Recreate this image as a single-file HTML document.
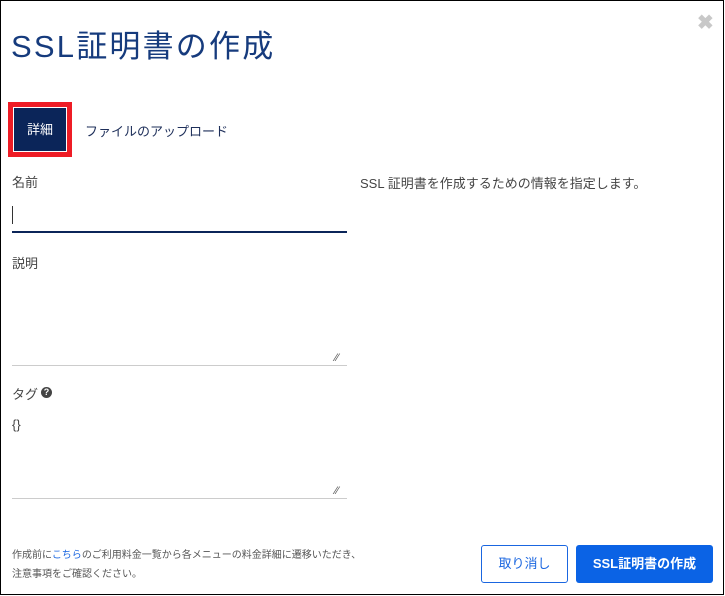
<!DOCTYPE html>
<html><head><meta charset="utf-8"><style>
*{margin:0;padding:0;box-sizing:border-box}
body{width:725px;height:596px;background:#fff;font-family:"Liberation Sans","Noto Sans CJK JP",sans-serif;position:relative;overflow:hidden}
.frame{position:absolute;left:0;top:0;width:724px;height:595px;border:1px solid #000}
.a{position:absolute;white-space:nowrap}
.lbl{font-size:13px;color:#444}
</style></head><body>
<div class="frame"></div>
<div class="a" style="left:11px;top:21px;font-size:31px;color:#163b7d;letter-spacing:2.2px">SSL証明書の作成</div>
<div class="a" style="left:697px;top:10px;font-size:20px;color:#c8c8c8;font-weight:bold">✖</div>
<div class="a" style="left:8px;top:102px;width:64px;height:55px;background:#ee1c25"></div>
<div class="a" style="left:13px;top:107px;width:54px;height:45px;background:#0b2559;border:1px solid #fff;color:#fff;font-size:13px;text-align:center;line-height:43px">詳細</div>
<div class="a" style="left:85px;top:121px;font-size:13px;color:#1e2f5a">ファイルのアップロード</div>
<div class="a lbl" style="left:12px;top:172px">名前</div>
<div class="a" style="left:12px;top:206px;width:1px;height:18px;background:#333"></div>
<div class="a" style="left:12px;top:231px;width:335px;height:2px;background:#0b2559"></div>
<div class="a lbl" style="left:12px;top:253px">説明</div>
<div class="a" style="left:12px;top:365px;width:335px;height:1px;background:#ccc"></div>
<div class="a" style="left:335px;top:352px;font-size:11px;color:#555">⁄⁄</div>
<div class="a lbl" style="left:12px;top:384px">タグ</div>
<div class="a" style="left:41px;top:387px;width:11px;height:11px;border-radius:50%;background:#444;color:#fff;font-size:9px;font-weight:bold;text-align:center;line-height:11px">?</div>
<div class="a lbl" style="left:12px;top:417px">{}</div>
<div class="a" style="left:12px;top:498px;width:335px;height:1px;background:#ccc"></div>
<div class="a" style="left:335px;top:485px;font-size:11px;color:#555">⁄⁄</div>
<div class="a" style="left:360px;top:173px;font-size:13px;color:#444">SSL 証明書を作成するための情報を指定します。</div>
<div class="a" style="left:12px;top:546px;font-size:10px;color:#555;line-height:19px">作成前に<span style="color:#1a66e0">こちら</span>のご利用料金一覧から各メニューの料金詳細に遷移いただき、<br>注意事項をご確認ください。</div>
<div class="a" style="left:481px;top:545px;width:87px;height:38px;border:1px solid #1a66e0;border-radius:3px;color:#1a66e0;font-size:13px;text-align:center;line-height:36px">取り消し</div>
<div class="a" style="left:576px;top:545px;width:137px;height:38px;background:#0b63e5;border-radius:3px;color:#fff;font-size:13px;font-weight:bold;text-align:center;line-height:38px">SSL証明書の作成</div>
</body></html>
